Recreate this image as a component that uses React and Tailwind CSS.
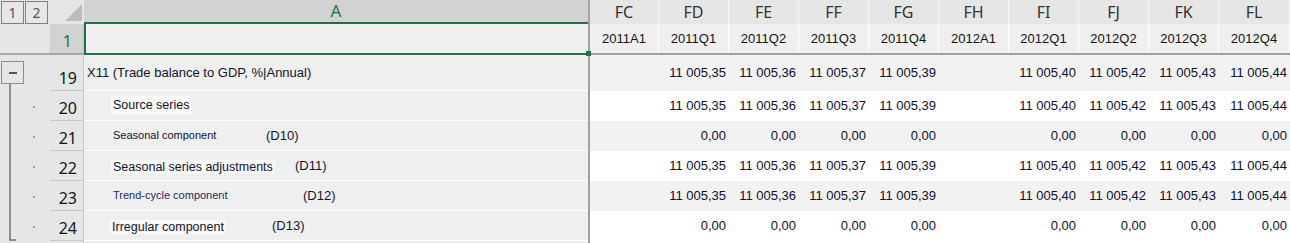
import React from "react";

const COLS = [
  { n: "FC", p: "2011A1", w: "w-[69px]" },
  { n: "FD", p: "2011Q1", w: "w-[70px]" },
  { n: "FE", p: "2011Q2", w: "w-[70px]" },
  { n: "FF", p: "2011Q3", w: "w-[70px]" },
  { n: "FG", p: "2011Q4", w: "w-[70px]" },
  { n: "FH", p: "2012A1", w: "w-[70px]" },
  { n: "FI", p: "2012Q1", w: "w-[70px]" },
  { n: "FJ", p: "2012Q2", w: "w-[70px]" },
  { n: "FK", p: "2012Q3", w: "w-[70px]" },
  { n: "FL", p: "2012Q4", w: "w-[71px]" },
];

const VALS = ["", "11 005,35", "11 005,36", "11 005,37", "11 005,39", "", "11 005,40", "11 005,42", "11 005,43", "11 005,44"];
const ZEROS = ["", "0,00", "0,00", "0,00", "0,00", "", "0,00", "0,00", "0,00", "0,00"];
const EMPTY = ["", "", "", "", "", "", "", "", "", ""];

const ROWS = [
  { id: "r19", num: "19", h: "h-[36px]", bg: "bg-[#f2f2f2]", vals: VALS, kind: "start" },
  { id: "r20", num: "20", h: "h-[30px]", bg: "bg-white", vals: VALS, kind: "mid" },
  { id: "r21", num: "21", h: "h-[30px]", bg: "bg-[#f2f2f2]", vals: ZEROS, kind: "mid" },
  { id: "r22", num: "22", h: "h-[30px]", bg: "bg-white", vals: VALS, kind: "mid" },
  { id: "r23", num: "23", h: "h-[30px]", bg: "bg-[#f2f2f2]", vals: VALS, kind: "mid" },
  { id: "r24", num: "24", h: "h-[30px]", bg: "bg-white", vals: ZEROS, kind: "end" },
  { id: "r25", num: "", h: "h-[30px]", bg: "bg-white", vals: EMPTY, kind: "none" },
];

function Label({ id }) {
  if (id === "r19")
    return <span className="pl-[3px] text-[13px] text-[#141430]">X11 (Trade balance to GDP, %|Annual)</span>;
  if (id === "r20")
    return (
      <span className="ml-[27px] bg-[#f8f8f8] px-[2px] text-[12.5px] text-[#141430]">Source series</span>
    );
  if (id === "r21")
    return (
      <span className="ml-[29px] flex items-center text-[#141430]">
        <span className="w-[153px] text-[11px]">Seasonal component</span>
        <span className="text-[13px]">(D10)</span>
      </span>
    );
  if (id === "r22")
    return (
      <span className="ml-[27px] flex items-center text-[#141430]">
        <span className="w-[184px]">
          <span className="bg-[#f8f8f8] px-[2px] text-[12.5px]">Seasonal series adjustments</span>
        </span>
        <span className="text-[13px]">(D11)</span>
      </span>
    );
  if (id === "r23")
    return (
      <span className="ml-[29px] flex items-center">
        <span className="w-[190px] text-[11px] text-[#1c2a66]">Trend-cycle component</span>
        <span className="text-[13px] text-[#141430]">(D12)</span>
      </span>
    );
  if (id === "r24")
    return (
      <span className="ml-[26px] flex items-center text-[#141430]">
        <span className="w-[162px]">
          <span className="bg-[#f8f8f8] px-[2px] text-[12.5px]">Irregular component</span>
        </span>
        <span className="text-[13px]">(D13)</span>
      </span>
    );
  return null;
}

function Outline({ kind, h }) {
  return (
    <div className={`relative w-[50px] shrink-0 bg-[#e6e6e6] ${h}`}>
      {kind === "start" && (
        <>
          <div className="absolute left-[1px] top-[6px] flex h-[23px] w-[23px] items-center justify-center border border-[#8c8c8c]">
            <div className="h-[2px] w-[8px] bg-[#555555]" />
          </div>
          <div className="absolute bottom-0 left-[9px] top-[29px] w-[2px] bg-[#8c8c8c]" />
        </>
      )}
      {(kind === "mid" || kind === "end") && (
        <>
          <div className="absolute left-[9px] top-0 h-full w-[2px] bg-[#8c8c8c]" />
          <div className="absolute left-[33px] top-[15px] h-[2px] w-[2px] bg-[#a0a0a0]" />
        </>
      )}
      {kind === "end" && (
        <div className="absolute bottom-0 left-[9px] h-[2px] w-[7px] bg-[#8c8c8c]" />
      )}
    </div>
  );
}

export default function App() {
  return (
    <div className="h-[243px] w-[1290px] overflow-hidden bg-white font-['Liberation_Sans',Arial,sans-serif]">
      {/* Column header row */}
      <div className="flex h-[24px]">
        <div className="flex w-[50px] shrink-0 gap-[1px] bg-[#e6e6e6] pl-[1px] pt-[1px]">
          <div className="flex h-[23px] w-[23px] items-center justify-center border border-[#7f7f7f] font-['Noto_Sans',sans-serif] text-[14px] text-[#555]">1</div>
          <div className="flex h-[23px] w-[23px] items-center justify-center border border-[#7f7f7f] font-['Noto_Sans',sans-serif] text-[14px] text-[#555]">2</div>
        </div>
        <div className="flex w-[34px] shrink-0 items-start justify-end bg-[#e6e6e6] pr-[2px] pt-[4px]">
          <svg width="17" height="17" viewBox="0 0 17 17">
            <polygon points="17,0 17,17 0,17" fill="#bcbcbc" />
          </svg>
        </div>
        <div className="flex w-[504px] shrink-0 items-center justify-center border-b-2 border-[#217346] bg-[#d2d2d2] font-['Noto_Sans',sans-serif] text-[17px] text-[#217346]">
          A
        </div>
        <div className="w-[2px] shrink-0 bg-[#a2a2a2]" />
        {COLS.map((c) => (
          <div
            key={c.n}
            className={`${c.w} flex shrink-0 items-center justify-center border-r border-[#f6f6f6] bg-[#e6e6e6] font-['Noto_Sans',sans-serif] text-[16px] text-[#333]`}
          >
            {c.n}
          </div>
        ))}
      </div>

      {/* Row 1 */}
      <div className="flex h-[29px]">
        <div className="w-[50px] shrink-0 bg-[#e6e6e6]" />
        <div className="flex w-[34px] shrink-0 items-end justify-end border-r border-[#c4c4c4] bg-[#d2d2d2] pb-[4px] pr-[11px] font-['Noto_Sans',sans-serif] text-[16px] leading-none text-[#217346]">
          1
        </div>
        <div className="w-[504px] shrink-0 border-l-2 border-[#217346] bg-[#efefef]" />
        <div className="w-[2px] shrink-0 bg-[#a2a2a2]" />
        {COLS.map((c) => (
          <div
            key={c.n}
            className={`${c.w} flex shrink-0 items-center justify-center border-r border-white bg-[#efefef] text-[13px] text-[#141414]`}
          >
            {c.p}
          </div>
        ))}
      </div>

      {/* Frozen pane divider */}
      <div className="relative flex h-[2px]">
        <div className="w-[84px] shrink-0 bg-[#a8a8a8]" />
        <div className="w-[504px] shrink-0 bg-[#217346]" />
        <div className="flex-1 bg-[#a2a2a2]" />
        <div className="absolute left-[586px] top-[-2px] h-[5px] w-[5px] bg-[#217346]" />
      </div>

      {/* Body rows */}
      {ROWS.map((r) => (
        <div key={r.id} className={`flex ${r.h}`}>
          <Outline kind={r.kind} h={r.h} />
          <div className="flex w-[34px] shrink-0 items-end justify-end border-b border-r border-[#c8c8c8] bg-[#e6e6e6] pb-[4px] pr-[6px] font-['Noto_Sans',sans-serif] text-[16px] leading-none text-[#141414]">
            {r.num}
          </div>
          <div className="flex w-[504px] shrink-0 items-center border-b border-white bg-[#efefef]">
            <Label id={r.id} />
          </div>
          <div className="w-[2px] shrink-0 bg-[#a2a2a2]" />
          {COLS.map((c, i) => (
            <div
              key={c.n}
              className={`${c.w} ${r.bg} flex shrink-0 items-center justify-end pr-[3px] text-[13px] text-[#0f0f30]`}
            >
              {r.vals[i]}
            </div>
          ))}
        </div>
      ))}
    </div>
  );
}
